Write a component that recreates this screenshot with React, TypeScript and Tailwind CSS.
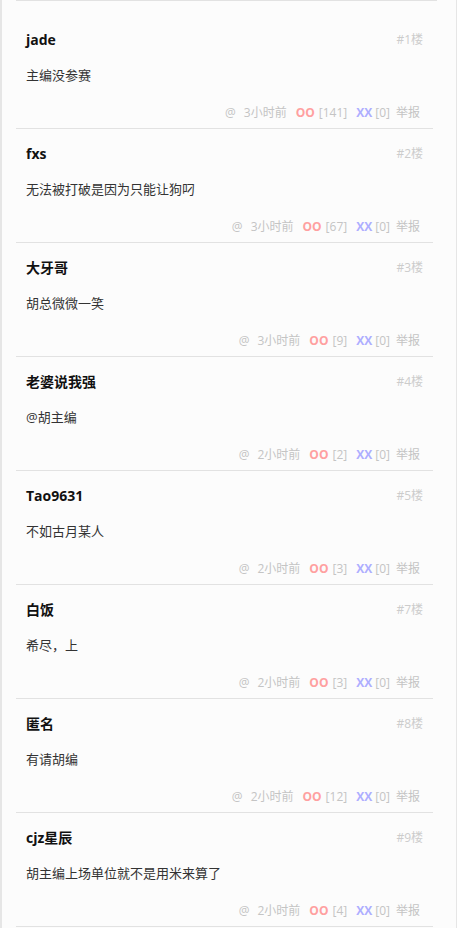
import React from "react";

const items = [
  { name: "jade", floor: "#1楼", text: "主编没参赛", time: "3小时前", oo: 141, xx: 0 },
  { name: "fxs", floor: "#2楼", text: "无法被打破是因为只能让狗叼", time: "3小时前", oo: 67, xx: 0 },
  { name: "大牙哥", floor: "#3楼", text: "胡总微微一笑", time: "3小时前", oo: 9, xx: 0 },
  { name: "老婆说我强", floor: "#4楼", text: "@胡主编", time: "2小时前", oo: 2, xx: 0 },
  { name: "Tao9631", floor: "#5楼", text: "不如古月某人", time: "2小时前", oo: 3, xx: 0 },
  { name: "白饭", floor: "#7楼", text: "希尽，上", time: "2小时前", oo: 3, xx: 0 },
  { name: "匿名", floor: "#8楼", text: "有请胡编", time: "2小时前", oo: 12, xx: 0 },
  { name: "cjz星辰", floor: "#9楼", text: "胡主编上场单位就不是用米来算了", time: "2小时前", oo: 4, xx: 0 },
];

export default function App() {
  return (
    <div
      className="w-[457px] h-[928px] bg-[#fcfcfc] border-l-2 border-r border-[#e6e6e6] overflow-hidden"
      style={{ fontFamily: '"Open Sans", "Noto Sans CJK SC", sans-serif' }}
    >
      <div className="ml-[14px] w-[421px] h-px bg-[#e2e2e2]" />
      <div className="ml-[14px] w-[417px] pt-[14px]">
        {items.map((it, i) => (
          <div key={i} className="h-[114px] border-b border-[#e2e2e2] pt-[15px] pl-[10px]">
            <div className="flex items-center justify-between h-5 pr-[10px]">
              <span className="text-[14px] font-bold text-[#111] leading-5">{it.name}</span>
              <span className="text-[12px] text-[#cccccc] leading-5">{it.floor}</span>
            </div>
            <div className="mt-[15px] h-5 text-[13px] leading-5 text-[#333]">{it.text}</div>
            <div className="mt-[18px] h-5 flex items-center justify-end pr-[13px] text-[12px] leading-5 text-[#c4c4c4]">
              <span>@</span>
              <span className="ml-[8px]">{it.time}</span>
              <span className="ml-[9px] font-bold text-[#ffa0a0]">OO</span>
              <span className="ml-[4px]">[{it.oo}]</span>
              <span className="ml-[9px] font-bold text-[#aeaeff]">XX</span>
              <span className="ml-[3px]">[{it.xx}]</span>
              <span className="ml-[6px]">举报</span>
            </div>
          </div>
        ))}
      </div>
    </div>
  );
}
